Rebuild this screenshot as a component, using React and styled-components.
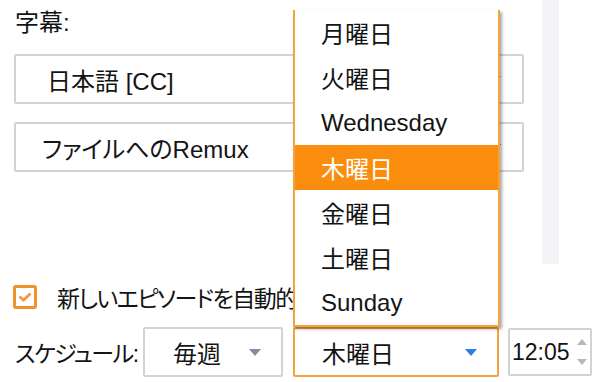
import React from "react";
import styled, { createGlobalStyle } from "styled-components";

const GlobalStyle = createGlobalStyle`
  body {
    margin: 0;
    background: #fff;
    font-family: "Liberation Sans", "Noto Sans CJK JP", sans-serif;
    font-feature-settings: "palt";
    color: #141414;
  }
`;

const days = ["月曜日", "火曜日", "Wednesday", "木曜日", "金曜日", "土曜日", "Sunday"];

function App() {
  return (
    <Page>
      <GlobalStyle />
      <Top>
        <Main>
          <Label>字幕:</Label>
          <Select $top={17} $indent={31}>
            日本語 [CC]
            <Caret $color="#3a3a4a" $right={21} />
          </Select>
          <Select $top={18} $indent={26}>
            ファイルへのRemux
            <Caret $color="#3a3a4a" $right={21} />
          </Select>
        </Main>
        <Track />
      </Top>

      <CheckRow>
        <CheckBox>
          <svg width="14" height="10" viewBox="0 0 14 10">
            <polyline points="1.5,4.5 5.5,8 12.5,1.5" fill="none" stroke="#f29a3c" strokeWidth="2.8" />
          </svg>
        </CheckBox>
        <CheckText>新しいエピソードを自動的にダウンロード</CheckText>
      </CheckRow>

      <ScheduleRow>
        <RowLabel>スケジュール:</RowLabel>
        <SmallSelect $width={140}>
          毎週
          <Caret $color="#8b87a6" $right={20} />
        </SmallSelect>
        <SmallSelect $width={206} $active>
          木曜日
          <Caret $color="#2f7fe0" $right={20} />
        </SmallSelect>
        <TimeBox>
          12:05
          <Spin>
            <Arrow $up />
            <Arrow />
          </Spin>
        </TimeBox>
      </ScheduleRow>

      <Popup>
        {days.map((d) => (
          <Option key={d} $selected={d === "木曜日"}>
            {d}
          </Option>
        ))}
      </Popup>
    </Page>
  );
}

export default App;

const Page = styled.div`
  position: relative;
  width: 599px;
  height: 382px;
  overflow: hidden;
`;

const Top = styled.div`
  display: flex;
  height: 264px;
`;

const Main = styled.div`
  width: 510px;
  margin-left: 14px;
  display: flex;
  flex-direction: column;
`;

const Track = styled.div`
  width: 17px;
  margin-left: 18px;
  background: #f3f3f6;
`;

const Label = styled.div`
  margin-top: 9px;
  padding-left: 1px;
  font-size: 24px;
  line-height: 28px;
`;

const Select = styled.div`
  position: relative;
  box-sizing: border-box;
  height: 50px;
  margin-top: ${(p) => p.$top}px;
  padding-left: ${(p) => p.$indent}px;
  border: 2px solid #d3d3d3;
  border-radius: 2px;
  display: flex;
  align-items: center;
  font-size: 24px;
`;

const Caret = styled.span`
  position: absolute;
  right: ${(p) => p.$right}px;
  top: 50%;
  margin-top: -3px;
  width: 0;
  height: 0;
  border-left: 6px solid transparent;
  border-right: 6px solid transparent;
  border-top: 7px solid ${(p) => p.$color};
`;

const CheckRow = styled.div`
  display: flex;
  align-items: center;
  gap: 20px;
  margin-top: 21px;
  padding-left: 13px;
  height: 24px;
`;

const CheckBox = styled.div`
  box-sizing: border-box;
  width: 24px;
  height: 24px;
  border: 3px solid #f0902a;
  border-radius: 3px;
  display: flex;
  align-items: center;
  justify-content: center;
  flex: none;
`;

const CheckText = styled.span`
  width: 236px;
  overflow: hidden;
  font-size: 23px;
  letter-spacing: -1.5px;
  white-space: nowrap;
`;

const ScheduleRow = styled.div`
  display: flex;
  align-items: center;
  gap: 10px;
  margin-top: 18px;
  padding-left: 15px;
  height: 50px;
`;

const RowLabel = styled.span`
  width: 118px;
  flex: none;
  font-size: 23px;
  letter-spacing: -1.5px;
  white-space: nowrap;
`;

const SmallSelect = styled.div`
  position: relative;
  box-sizing: border-box;
  width: ${(p) => p.$width}px;
  height: 50px;
  flex: none;
  border: 2px solid ${(p) => (p.$active ? "#f3a23f" : "#d3d3d3")};
  border-radius: 2px;
  padding-left: ${(p) => (p.$active ? 27 : 28)}px;
  display: flex;
  align-items: center;
  font-size: 24px;
`;

const TimeBox = styled.div`
  position: relative;
  box-sizing: border-box;
  width: 84px;
  height: 48px;
  flex: none;
  margin-left: -1px;
  border: 2px solid #d3d3d3;
  border-radius: 2px;
  padding-left: 2px;
  display: flex;
  align-items: center;
  font-size: 23px;
`;

const Spin = styled.div`
  position: absolute;
  right: 3px;
  top: 9px;
  bottom: 9px;
  display: flex;
  flex-direction: column;
  justify-content: space-between;
`;

const Arrow = styled.span`
  width: 0;
  height: 0;
  border-left: 5px solid transparent;
  border-right: 5px solid transparent;
  ${(p) => (p.$up ? "border-bottom: 6px solid #b8b8b8;" : "border-top: 6px solid #b8b8b8;")}
`;

const Popup = styled.div`
  position: absolute;
  top: 10px;
  left: 293px;
  width: 203px;
  border: 2px solid #f3a23f;
  border-top: none;
  background: #fff;
  box-shadow: 2px 2px 3px rgba(0, 0, 0, 0.35);
`;

const Option = styled.div`
  height: 45px;
  display: flex;
  align-items: center;
  padding-left: 26px;
  font-size: 24px;
  background: ${(p) => (p.$selected ? "#fa8c0e" : "#fff")};
  color: ${(p) => (p.$selected ? "#fff" : "#141414")};
`;
